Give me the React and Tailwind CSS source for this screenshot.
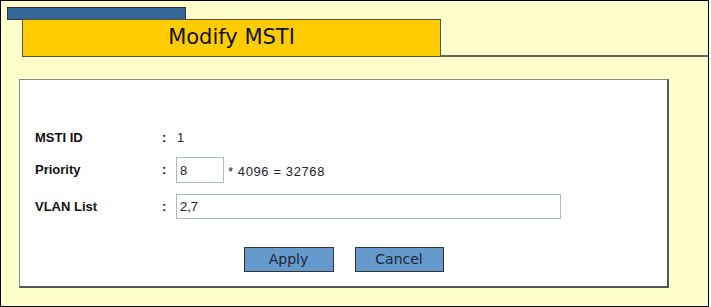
import React from 'react';

const labelCls = 'w-[127px] font-bold text-[13px] text-[#111]';
const colonCls = 'w-[14px] font-bold text-[13px] text-[#111]';

const Row = ({ label, children, className }) => (
  <div className={`flex items-center ${className}`}>
    <div className={labelCls}>{label}</div>
    <div className={colonCls}>:</div>
    <div className="flex items-center">{children}</div>
  </div>
);

const App = () => {
  return (
    <div className="w-[711px] h-[307px] bg-white" style={{ fontFamily: '"Liberation Sans", Arial, sans-serif' }}>
      <div className="w-[709px] h-[307px] border border-black bg-[#ffffcc] flex flex-col">
        {/* header tab */}
        <div className="ml-[6px] mt-[6px] w-[179px] h-[13px] bg-[#336699] border border-[#333333]" />
        <div className="flex -mt-px">
          <div
            className="ml-[21px] w-[419px] h-[38px] bg-[#ffcc00] border border-[#555544] flex items-center justify-center text-[21px] text-[#111]"
            style={{ fontFamily: '"DejaVu Sans", Verdana, sans-serif' }}
          >
            Modify MSTI
          </div>
          <div className="flex-1 border-b-2 border-[#666655] -mb-0" />
        </div>

        {/* form panel */}
        <div className="ml-[18px] mt-[22px] w-[650px] h-[209px] bg-white border-t border-l border-[#8a8a8a] border-r-2 border-b-2 border-r-[#555555] border-b-[#555555] pl-[15px] pt-[45px]">
          <Row label="MSTI ID" className="h-[26px]">
            <span className="text-[13px] text-[#222] pl-px">1</span>
          </Row>
          <Row label="Priority" className="h-[26px] mt-[6px]">
            <input
              type="text"
              defaultValue="8"
              className="w-[48px] h-[26px] border border-[#a5b9d1] px-[3px] text-[13px] text-[#222] outline-none"
            />
            <span className="ml-[4px] mt-[4px] text-[13px] text-[#222] tracking-[0.6px]">* 4096 = 32768</span>
          </Row>
          <Row label="VLAN List" className="h-[25px] mt-[11px]">
            <input
              type="text"
              defaultValue="2,7"
              className="w-[385px] h-[25px] border border-[#a5b9d1] px-[3px] text-[13px] text-[#222] outline-none"
            />
          </Row>
          <div
            className="flex justify-center gap-[21px] mt-[28px] -ml-[15px]"
            style={{ fontFamily: '"DejaVu Sans", Verdana, sans-serif' }}
          >
            <button className="w-[90px] h-[25px] bg-[#6699cc] border border-[#333333] text-[14px] text-[#1a2633]">
              Apply
            </button>
            <button className="w-[89px] h-[25px] bg-[#6699cc] border border-[#333333] text-[14px] text-[#1a2633]">
              Cancel
            </button>
          </div>
        </div>
      </div>
    </div>
  );
};

export default App;
